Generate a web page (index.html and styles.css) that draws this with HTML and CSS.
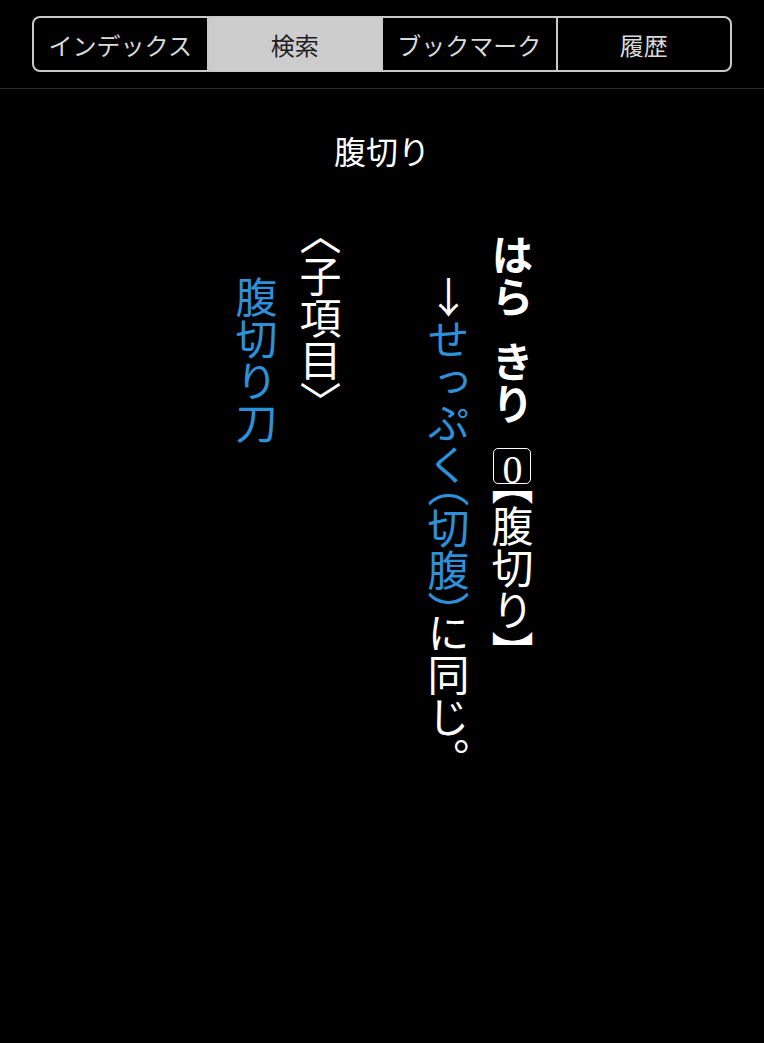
FILE: index.html
```html
<!DOCTYPE html>
<html lang="ja">
<head>
  <meta charset="UTF-8">
  <meta name="viewport" content="width=device-width, initial-scale=1.0">
  <title>腹切り</title>
  <link rel="stylesheet" href="styles.css">
</head>
<body>
  <div class="toolbar">
    <div class="segmented">
      <div class="seg">インデックス</div>
      <div class="seg active">検索</div>
      <div class="seg">ブックマーク</div>
      <div class="seg">履歴</div>
    </div>
  </div>

  <main class="entry-view">
    <h1 class="entry-title">腹切り</h1>

    <div class="entry-body">
      <p class="col headword"><span class="yomi">はら</span><span class="yomi gap">きり</span><span class="accent">0</span><span class="kanji"><span class="br">【</span>腹切り<span class="br">】</span></span></p>
      <p class="col indent"><span class="arrow">↓</span><span class="link">せっぷく<span class="br">（</span>切腹<span class="br">）</span></span>に同じ。</p>
      <p class="col spacer"></p>
      <p class="col"><span class="br">〈</span>子項目<span class="br">〉</span></p>
      <p class="col indent link">腹切り刀</p>
    </div>
  </main>
</body>
</html>
```

FILE: styles.css
```css
body {
  margin: 0;
  background: #000;
  color: #fff;
  font-family: "Noto Sans CJK JP", "Noto Sans", sans-serif;
}

.toolbar {
  padding: 16px 32px;
  border-bottom: 1px solid #2e2e2e;
}

.segmented {
  display: flex;
  height: 56px;
  box-sizing: border-box;
  border: 2px solid #c9c9c9;
  border-radius: 8px;
  overflow: hidden;
}

.seg {
  flex: 1;
  display: flex;
  align-items: center;
  justify-content: center;
  font-size: 24px;
  color: #dadada;
  border-left: 2px solid #c9c9c9;
}

.seg:first-child {
  border-left: none;
}

.seg.active {
  background: #cdcdcd;
  color: #1e1e1e;
}

.entry-title {
  margin: 41px 0 0;
  text-align: center;
  font-size: 32px;
  font-weight: normal;
  line-height: 40px;
}

.entry-body {
  writing-mode: vertical-rl;
  height: 640px;
  margin: 64px 0 0 224px;
  font-size: 42px;
}

.col {
  margin: 0;
  line-height: 64px;
}

.indent {
  text-indent: 1em;
}

.spacer {
  width: 64px;
}

.headword .yomi {
  font-weight: bold;
}

.headword .gap {
  margin-top: 23px;
}

.accent {
  display: inline-block;
  width: 38px;
  height: 36px;
  box-sizing: border-box;
  margin-top: 23px;
  border: 1.5px solid #fff;
  border-radius: 5px;
  text-align: center;
  text-combine-upright: all;
  font-family: "Liberation Serif", serif;
  font-size: 40px;
  line-height: 35px;
}

.br {
  font-feature-settings: "vhal" 1;
}

.arrow {
  text-orientation: upright;
}

.link {
  color: #2d90d8;
}
```
